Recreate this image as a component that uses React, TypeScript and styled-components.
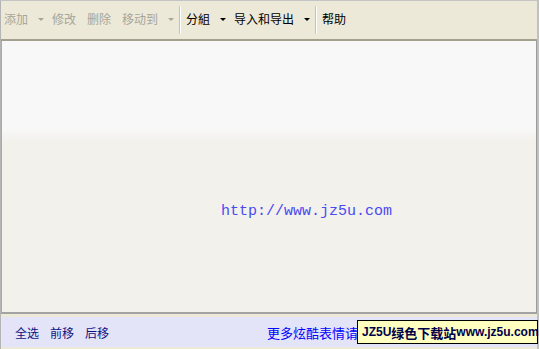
import React from "react";
import styled, { createGlobalStyle } from "styled-components";

const GlobalStyle = createGlobalStyle`
  html, body {
    margin: 0;
    padding: 0;
    background: #ece9d8;
  }
  body {
    font-family: "Noto Sans CJK SC", "Liberation Sans", sans-serif;
    font-size: 12px;
  }
`;

const Window = styled.div`
  width: 539px;
  height: 349px;
  box-sizing: border-box;
  display: flex;
  flex-direction: column;
  border-top: 1px solid #c4c4c4;
  border-left: 1px solid #b4b4b4;
  border-right: 2px solid #c0c0c0;
  background: #ece9d8;
  position: relative;
`;

const Toolbar = styled.div`
  height: 38px;
  display: flex;
  align-items: center;
  padding-left: 3px;
  background: #ece9d8;
  border-bottom: 2px solid #a3a08e;
  flex-shrink: 0;
`;

const ToolItem = styled.span<{ disabled?: boolean }>`
  display: flex;
  align-items: center;
  height: 22px;
  margin-right: 11px;
  margin-top: -2px;
  color: ${(p) => (p.disabled ? "#a6a69a" : "#000")};
  line-height: 12px;
  white-space: nowrap;
`;

const Arrow = styled.span<{ disabled?: boolean }>`
  display: inline-block;
  width: 0;
  height: 0;
  margin-left: 10px;
  margin-right: -3px;
  border-left: 3px solid transparent;
  border-right: 3px solid transparent;
  border-top: 3px solid ${(p) => (p.disabled ? "#a6a69a" : "#000")};
`;

const Separator = styled.span`
  width: 1px;
  height: 28px;
  margin: 0 5px 0 -3px;
  background: #c6c3b2;
  border-right: 1px solid #fff;
`;

const Content = styled.div`
  flex: 1;
  display: flex;
  align-items: center;
  justify-content: center;
  border-left: 1px solid #aaa;
  border-right: 1px solid #9c9c9c;
  border-bottom: 2px solid #a3a3a3;
  background: linear-gradient(to bottom, #f8f8f8 0, #f8f8f8 88px, #f3f1ec 100px, #f3f1ec 100%);
`;

const Url = styled.span`
  font-family: "Liberation Mono", "DejaVu Sans Mono", monospace;
  font-size: 15px;
  color: #4a4af2;
  margin: 70px 0 0 75px;
`;

const Footer = styled.div`
  height: 30px;
  margin: 3px 0 2px 1px;
  background: #e4e4f8;
  display: flex;
  align-items: center;
  padding-left: 13px;
  flex-shrink: 0;
`;

const FooterLink = styled.span`
  color: #101080;
  margin-right: 11px;
`;

const MoreLink = styled.span`
  color: #0000ff;
  font-size: 13px;
  margin-left: 147px;
  margin-top: 1px;
  white-space: nowrap;
  overflow: hidden;
`;

const Watermark = styled.div`
  position: absolute;
  left: 356px;
  top: 319px;
  width: 181px;
  height: 24px;
  box-sizing: border-box;
  border: 1px solid #000;
  background: #ffffc0;
  color: #00004a;
  font-weight: bold;
  font-size: 13px;
  display: flex;
  align-items: center;
  padding-left: 4px;
  white-space: nowrap;
`;

const Latin = styled.span`
  font-family: "Liberation Sans", "DejaVu Sans", sans-serif;
  font-size: 12px;
`;

export default function App() {
  return (
    <>
      <GlobalStyle />
      <Window>
        <Toolbar>
          <ToolItem disabled>
            添加
            <Arrow disabled />
          </ToolItem>
          <ToolItem disabled>修改</ToolItem>
          <ToolItem disabled>删除</ToolItem>
          <ToolItem disabled>
            移动到
            <Arrow disabled />
          </ToolItem>
          <Separator />
          <ToolItem>
            分組
            <Arrow />
          </ToolItem>
          <ToolItem>
            导入和导出
            <Arrow />
          </ToolItem>
          <Separator />
          <ToolItem>帮助</ToolItem>
        </Toolbar>
        <Content>
          <Url>http://www.jz5u.com</Url>
        </Content>
        <Footer>
          <FooterLink>全选</FooterLink>
          <FooterLink>前移</FooterLink>
          <FooterLink>后移</FooterLink>
          <MoreLink>更多炫酷表情请登录</MoreLink>
        </Footer>
        <Watermark>
          <Latin>JZ5U</Latin>绿色下载站<Latin>www.jz5u.com</Latin>
        </Watermark>
      </Window>
    </>
  );
}
